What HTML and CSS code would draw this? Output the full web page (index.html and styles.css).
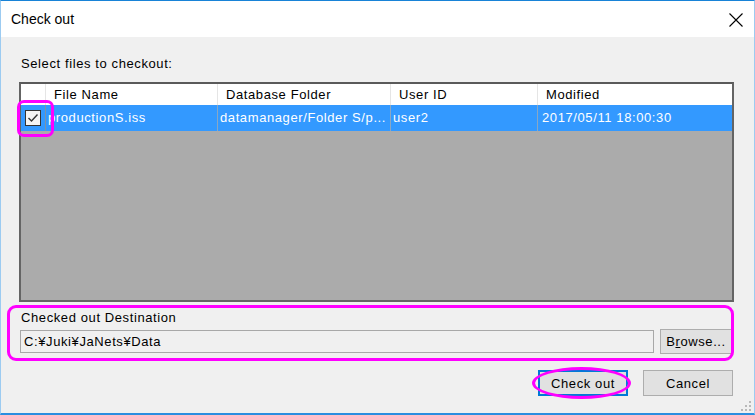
FILE: index.html
```html
<!DOCTYPE html>
<html lang="en">
<head>
    <meta charset="UTF-8">
    <title>Check out</title>
    <link rel="stylesheet" href="styles.css">
</head>
<body>
    <div class="window">
        <div class="titlebar">
            <span class="title">Check out</span>
            <svg class="close" width="14" height="14" viewBox="0 0 14 14">
                <path d="M0.5 0.5 L13.5 13.5 M13.5 0.5 L0.5 13.5" stroke="#000" stroke-width="1.1" fill="none"/>
            </svg>
        </div>
        <div class="client">
            <div class="label">Select files to checkout:</div>
            <div class="listview">
                <div class="lv-header">
                    <div class="col"></div>
                    <div class="col">File Name</div>
                    <div class="col">Database Folder</div>
                    <div class="col">User ID</div>
                    <div class="col last">Modified</div>
                </div>
                <div class="lv-row selected">
                    <div class="cell check">
                        <svg width="16" height="16" viewBox="0 0 16 16">
                            <rect x="0.5" y="0.5" width="15" height="15" fill="#f4f4f4" stroke="#333"/>
                            <path d="M3.5 8 L6.5 11 L12.5 4.5" stroke="#333" stroke-width="1.4" fill="none"/>
                        </svg>
                    </div>
                    <div class="cell">productionS.iss</div>
                    <div class="cell">datamanager/Folder S/p...</div>
                    <div class="cell">user2</div>
                    <div class="cell last">2017/05/11 18:00:30</div>
                </div>
                <div class="lv-empty"></div>
            </div>
            <div class="label dest-label">Checked out Destination</div>
            <div class="dest-row">
                <div class="textbox">C:¥Juki¥JaNets¥Data</div>
                <button class="btn browse">B<u>r</u>owse...</button>
            </div>
            <div class="buttons">
                <button class="btn default">Check out</button>
                <button class="btn">Cancel</button>
            </div>
            <svg class="grip" width="10" height="10" viewBox="0 0 10 10">
                <rect x="8" y="0" width="2" height="2" fill="#b8b8b8"/>
                <rect x="4" y="4" width="2" height="2" fill="#b8b8b8"/>
                <rect x="8" y="4" width="2" height="2" fill="#b8b8b8"/>
                <rect x="0" y="8" width="2" height="2" fill="#b8b8b8"/>
                <rect x="4" y="8" width="2" height="2" fill="#b8b8b8"/>
                <rect x="8" y="8" width="2" height="2" fill="#b8b8b8"/>
            </svg>
        </div>

        <!-- annotation marks -->
        <div class="mark mark-check"></div>
        <div class="mark mark-dest"></div>
        <div class="mark mark-button"></div>
    </div>
</body>
</html>
```

FILE: styles.css
```css
body {
    margin: 0;
    padding: 0;
    background: #fff;
    font-family: "Liberation Sans", Arial, sans-serif;
    font-size: 13px;
    letter-spacing: 0.6px;
    color: #000;
}
.window {
    position: relative;
    width: 755px;
    height: 415px;
    box-sizing: border-box;
    border-top: 1px solid #1883d7;
    border-left: 1px solid #9ccbf1;
    border-right: 1px solid #9ccbf1;
    border-bottom: 2px solid #2b8ee0;
    display: flex;
    flex-direction: column;
}
.titlebar {
    height: 36px;
    background: #fff;
    display: flex;
    align-items: center;
    justify-content: space-between;
    padding: 0 11px 0 10px;
}
.title {
    font-size: 14px;
    letter-spacing: 0;
    margin-top: -1px;
}
.close {
    display: block;
    margin-top: 1px;
}
.client {
    flex: 1;
    position: relative;
    background: #f0f0f0;
    padding: 19px 20px 0 18px;
    display: flex;
    flex-direction: column;
}
.label {
    line-height: 16px;
    height: 16px;
    padding-left: 2px;
}
.listview {
    margin-top: 10px;
    height: 220px;
    box-sizing: border-box;
    border: 2px solid #646464;
    border-top-color: #5a5a5a;
    display: flex;
    flex-direction: column;
    background: #ababab;
}
.lv-header, .lv-row {
    display: grid;
    grid-template-columns: 25px 172px 173px 147px 1fr;
}
.lv-header {
    height: 21px;
    background: #fff;
}
.lv-header .col {
    border-right: 1px solid #e5e5e5;
    padding-left: 8px;
    line-height: 21px;
    white-space: nowrap;
}
.lv-header .col.last {
    border-right: none;
}
.lv-row {
    height: 26px;
}
.lv-row.selected {
    background: #3399ff;
    color: #fff;
}
.lv-row .cell {
    border-right: 1px solid #8aa7c4;
    line-height: 26px;
    padding-left: 2px;
    white-space: nowrap;
    overflow: hidden;
}
.lv-row .cell.check {
    padding-left: 4px;
    display: flex;
    align-items: center;
    border-right-color: #7d93a8;
}
.lv-row .cell.last {
    border-right: none;
    padding-left: 4px;
}
.lv-empty {
    flex: 1;
}
.dest-label {
    margin-top: 8px;
}
.dest-row {
    margin-top: 3px;
    margin-right: 2px;
    display: flex;
    align-items: center;
    gap: 6px;
}
.textbox {
    flex: 1;
    height: 23px;
    box-sizing: border-box;
    margin-left: 1px;
    border: 1px solid #a8a8a8;
    background: #f0f0f0;
    padding-left: 3px;
    line-height: 21px;
    white-space: nowrap;
}
.btn {
    font-family: "Liberation Sans", Arial, sans-serif;
    font-size: 13px;
    letter-spacing: 0.6px;
    color: #000;
    background: #e1e1e1;
    border: 1px solid #adadad;
    padding: 0;
    margin: 0;
    box-sizing: border-box;
}
.browse {
    width: 72px;
    height: 25px;
}
.buttons {
    margin-top: 16px;
    margin-right: 1px;
    display: flex;
    justify-content: flex-end;
    gap: 15px;
}
.buttons .btn {
    width: 90px;
    height: 26px;
}
.btn.default {
    border: 2px solid #0078d7;
}
.grip {
    position: absolute;
    right: 3px;
    bottom: 2px;
}
.mark {
    position: absolute;
    box-sizing: border-box;
    border: 3px solid #ff00ff;
}
.mark-check {
    left: 16px;
    top: 99px;
    width: 37px;
    height: 37px;
    border-radius: 7px;
}
.mark-dest {
    left: 6px;
    top: 304px;
    width: 727px;
    height: 56px;
    border-radius: 9px;
}
.mark-button {
    left: 531px;
    top: 366px;
    width: 99px;
    height: 32px;
    border-radius: 50%;
}
```
